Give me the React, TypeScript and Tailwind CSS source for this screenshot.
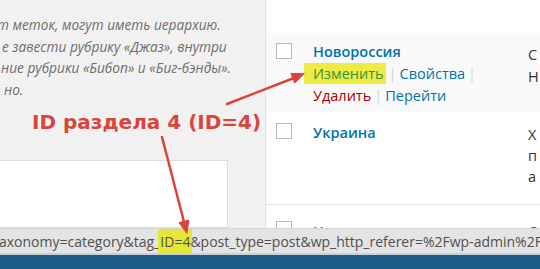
import React from 'react';

const Sep = () => <span className="px-[3px] text-[#d4d4d4]">|</span>;

const Checkbox = () => <div className="h-4 w-4 border border-[#b4b9be] bg-white" />;

export default function App() {
  return (
    <div className="relative flex h-[269px] w-[540px] flex-col overflow-hidden bg-[#f1f1f1] font-['Open_Sans',sans-serif]">
      {/* Page area */}
      <div className="flex h-[228px] overflow-hidden">
        {/* Left column */}
        <div className="flex w-[265px] shrink-0 flex-col">
          <div className="mt-[14px] text-[13.7px] italic leading-[21.5px] text-[#6e6e6e] whitespace-nowrap">
            <div className="-ml-[3px]">т меток, могут иметь иерархию.</div>
            <div className="ml-[2px]">е завести рубрику «Джаз», внутри</div>
            <div className="ml-[1px]">ние рубрики «Бибоп» и «Биг-бэнды».</div>
            <div className="ml-[4px]">но.</div>
          </div>
          <div className="mt-[60px] w-[228px] flex-1 border border-l-0 border-[#dcdcdc] bg-white" />
        </div>

        {/* Categories table */}
        <div className="flex-1 border-l border-[#e2e2e2] bg-white text-[14.5px] leading-[22px]">
          <div className="h-[33px]" />

          <div className="grid h-[79px] grid-cols-[47px_215px_1fr] bg-[#f9f9f9]">
            <div className="pl-[10px] pt-[10px]"><Checkbox /></div>
            <div className="pt-[8px] whitespace-nowrap">
              <div className="font-semibold text-[#0073aa]">Новороссия</div>
              <div>
                <span className="-ml-[9px] bg-[#ecec45] py-[1px] pl-[9px] pr-[2px] text-[#3f8f34]">Изменить</span>
                <Sep />
                <span className="text-[#0073aa]">Свойства</span>
                <Sep />
              </div>
              <div>
                <span className="text-[#a00]">Удалить</span>
                <Sep />
                <span className="text-[#0073aa]">Перейти</span>
              </div>
            </div>
            <div className="pt-[11px] text-[#333]">
              <div>С</div>
              <div>Н</div>
            </div>
          </div>

          <div className="grid h-[93px] grid-cols-[47px_215px_1fr] border-b border-[#e1e1e1]">
            <div className="pl-[10px] pt-[11px]"><Checkbox /></div>
            <div className="pt-[10px] font-semibold text-[#0073aa]">Украина</div>
            <div className="pt-[12px] leading-[21px] text-[#333]">
              <div>Х</div>
              <div>п</div>
              <div>а</div>
            </div>
          </div>

          <div className="grid grid-cols-[47px_215px_1fr]">
            <div className="pl-[10px] pt-[16px]"><Checkbox /></div>
            <div className="pt-[16px] font-semibold text-[#0073aa]">Новости</div>
            <div className="pt-[16px] text-[#0073aa]">С</div>
          </div>
        </div>
      </div>

      {/* Browser status bar */}
      <div className="flex h-[25px] items-center overflow-hidden whitespace-nowrap border-t border-[#d6d6d6] bg-[#e4e4e4] text-[14px] text-[#505050]">
        <span className="-ml-[1px]">
          axonomy=category&amp;tag_<span className="-mx-[2px] bg-[#e6e63a] px-[2px] py-[3px]">ID=4</span>&amp;post_type=post&amp;wp_http_referer=%2Fwp-admin%2F
        </span>
      </div>
      <div className="h-[2px] bg-[#c4d2dc]" />
      <div className="flex-1 bg-[#1c5c87]" />

      {/* Annotation */}
      <div className="absolute left-[32px] top-[110px] font-['DejaVu_Sans',sans-serif] text-[20px] font-bold leading-[24px] text-[#d9453a] whitespace-nowrap">
        ID раздела 4 (ID=4)
      </div>
      <svg className="pointer-events-none absolute inset-0" width="540" height="269" viewBox="0 0 540 269">
        <g stroke="#d9433a" strokeWidth="2.5" strokeLinecap="round" fill="#d9433a">
          <line x1="227" y1="104" x2="294" y2="78" />
          <polygon points="304,74 294.6,83.1 291,73.7" strokeWidth="1" strokeLinejoin="round" />
          <line x1="162" y1="137" x2="184" y2="222" />
          <polygon points="187,233 188.8,220.1 179.2,222.7" strokeWidth="1" strokeLinejoin="round" />
        </g>
      </svg>
    </div>
  );
}
